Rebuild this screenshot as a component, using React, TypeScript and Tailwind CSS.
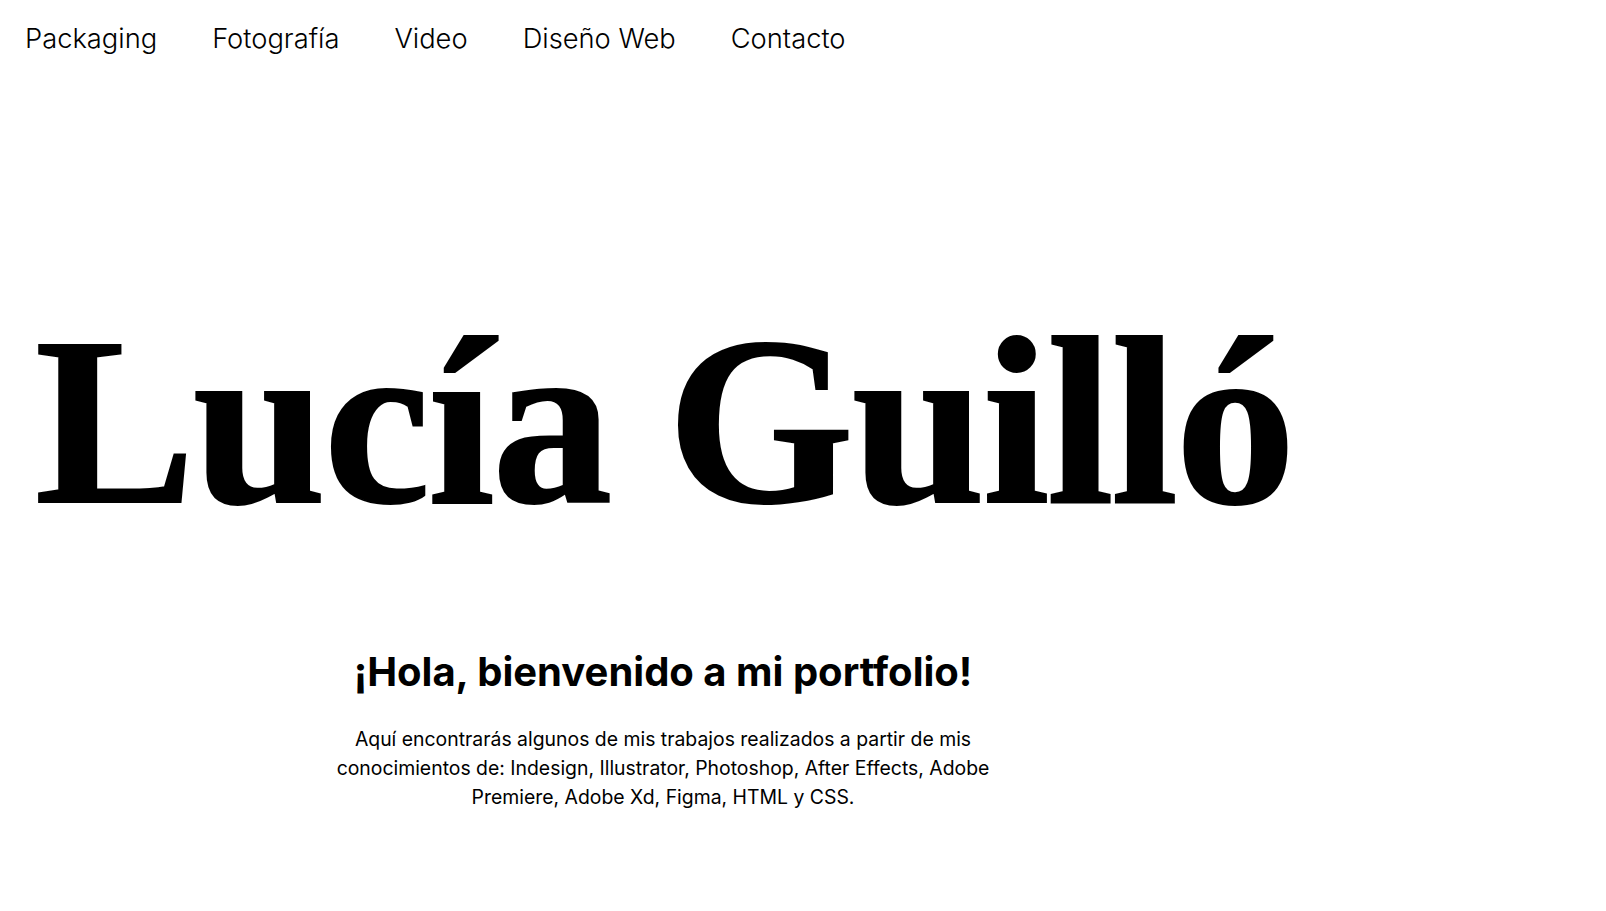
import React from "react";

const navItems = ["Packaging", "Fotografía", "Video", "Diseño Web", "Contacto"];

export default function App() {
  return (
    <div className="min-h-screen w-full bg-white text-black">
      <nav className="flex items-center gap-[55px] pl-[25px] h-[78px] font-['Inter',sans-serif] text-[27.3px] font-light">
        {navItems.map((n) => (
          <a key={n} href="#" className="text-black leading-none">
            {n}
          </a>
        ))}
      </nav>
      <h1 className="mt-[223px] pl-[35px] font-['Liberation_Serif',serif] text-[240px] font-bold leading-none tracking-[-2.4px] whitespace-nowrap [-webkit-text-stroke:2px_black]">
        Lucía Guilló
      </h1>
      <section className="w-[1326px] mt-[106px] flex flex-col items-center text-center font-['Inter',sans-serif]">
        <h2 className="text-[40px] font-bold leading-[50px]">¡Hola, bienvenido a mi portfolio!</h2>
        <p className="mt-[28px] text-[19.4px] leading-[29px] font-normal">
          <span className="block">Aquí encontrarás algunos de mis trabajos realizados a partir de mis</span>
          <span className="block">conocimientos de: Indesign, Illustrator, Photoshop, After Effects, Adobe</span>
          <span className="block">Premiere, Adobe Xd, Figma, HTML y CSS.</span>
        </p>
      </section>
    </div>
  );
}
